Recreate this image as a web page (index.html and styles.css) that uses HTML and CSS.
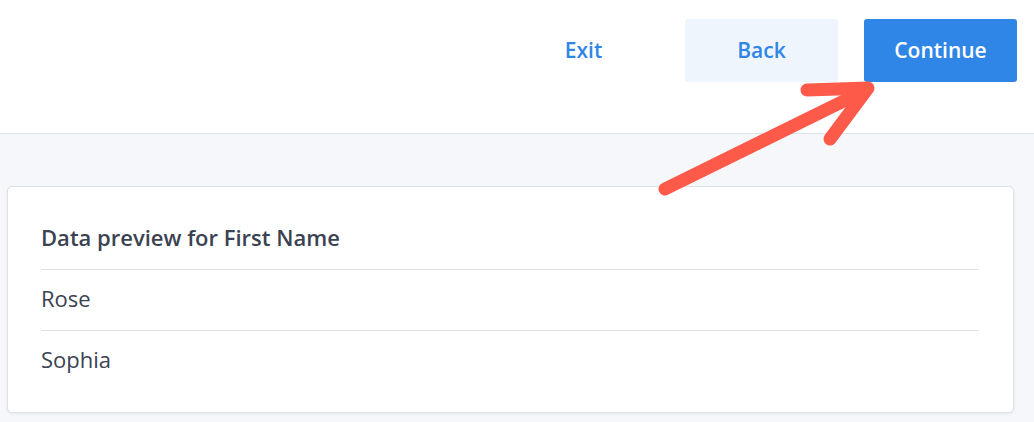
FILE: index.html
```html
<!DOCTYPE html>
<html>
<head>
<meta charset="utf-8">
<link rel="stylesheet" href="styles.css">
</head>
<body>
<header class="topbar">
  <div class="actions">
    <button class="btn btn-link">Exit</button>
    <button class="btn btn-soft">Back</button>
    <button class="btn btn-primary">Continue</button>
  </div>
</header>
<main class="content">
  <section class="card">
    <div class="card-title">Data preview for First Name</div>
    <div class="row">Rose</div>
    <div class="row">Sophia</div>
  </section>
</main>
<svg class="annotation" width="1034" height="422" viewBox="0 0 1034 422">
  <g fill="none" stroke="#fe5a4a" stroke-width="13" stroke-linecap="round" stroke-linejoin="round">
    <path d="M665 189 L866 90"/>
    <path d="M807 90 L868 88 L830 139"/>
  </g>
</svg>
</body>
</html>
```
FILE: styles.css
```css
* { box-sizing: border-box; }
html, body { margin: 0; padding: 0; }
body {
  width: 1034px;
  height: 422px;
  overflow: hidden;
  background: #f5f7fa;
  font-family: "Open Sans", "Lato", sans-serif;
  color: #3b4252;
  position: relative;
}
.topbar {
  height: 134px;
  background: #ffffff;
  border-bottom: 1px solid #dde1e8;
  padding: 19px 17px 0 0;
}
.actions {
  display: flex;
  justify-content: flex-end;
  gap: 26px;
}
.btn {
  width: 153px;
  height: 63px;
  border: none;
  border-radius: 3px;
  font-family: inherit;
  font-size: 21px;
  font-weight: 600;
  padding: 0 0 2px;
  cursor: pointer;
}
.btn-link { background: transparent; color: #2f86e6; margin-right: -1px; }
.btn-soft { background: #eef5fd; color: #2f86e6; }
.btn-primary { background: #2f86e6; color: #ffffff; }
.content {
  padding: 52px 20px 0 7px;
}
.card {
  background: #ffffff;
  border: 1px solid #dde1e8;
  border-radius: 5px;
  box-shadow: 0 1px 3px rgba(40, 50, 70, 0.08);
  padding: 37px 34px 21px 33px;
}
.card-title {
  font-size: 22px;
  font-weight: 600;
  line-height: 26px;
  padding-bottom: 19px;
  border-bottom: 1px solid #dde1e8;
}
.row {
  font-size: 22px;
  line-height: 57px;
  height: 61px;
  border-bottom: 1px solid #dde1e8;
}
.row:last-child { border-bottom: none; height: 60px; }
.annotation {
  position: absolute;
  left: 0;
  top: 0;
  pointer-events: none;
}
```
